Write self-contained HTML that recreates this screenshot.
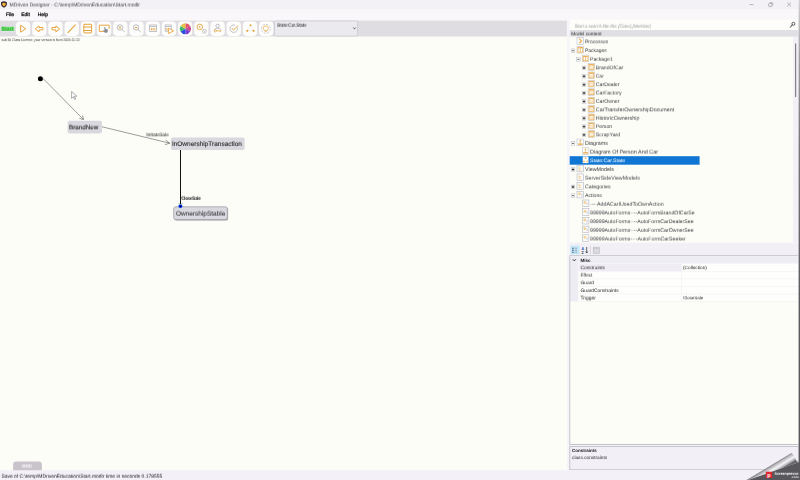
<!DOCTYPE html>
<html><head><meta charset="utf-8"><title>MDriven Designer</title>
<style>
html,body{margin:0;padding:0;}
body{width:800px;height:480px;overflow:hidden;position:relative;background:#fdfdf8;font-family:'Liberation Sans',sans-serif;}
.t{position:absolute;left:0;top:0;white-space:nowrap;text-rendering:geometricPrecision;line-height:10px;height:10px;will-change:transform;transform-origin:0 0;}
svg{position:absolute;left:0;top:0;}
</style></head><body>
<svg width="800" height="480" viewBox="0 0 800 480">
<defs>
<linearGradient id="curl" gradientUnits="userSpaceOnUse" x1="776" y1="462.4" x2="780.6" y2="469.8">
<stop offset="0" stop-color="#88888c"/><stop offset="0.18" stop-color="#b8b8bc"/><stop offset="0.55" stop-color="#f7f7f9"/><stop offset="0.85" stop-color="#b0b0b4"/><stop offset="1" stop-color="#6a6a6e"/>
</linearGradient>
<linearGradient id="edge" x1="0" y1="0" x2="0" y2="1"><stop offset="0" stop-color="#d2d2d5"/><stop offset="0.12" stop-color="#a0a0a4"/><stop offset="0.3" stop-color="#77777b"/><stop offset="0.62" stop-color="#5c5c60"/><stop offset="1" stop-color="#58585c"/></linearGradient>
</defs>
<!-- backgrounds -->
<rect x="0" y="0" width="800" height="9.4" fill="#f3f1f6"/>
<rect x="0" y="9.4" width="800" height="11.2" fill="#f9f7f9"/>
<rect x="0" y="20.6" width="566.9" height="15.9" fill="#e0dde2"/>
<rect x="566.9" y="20" width="3.3" height="450.2" fill="#f5f4f9"/>
<rect x="569.7" y="19.7" width="228.9" height="10.3" fill="#fdfdf9"/>
<rect x="569.7" y="30" width="228.9" height="6.8" fill="#e0dfe4"/>
<rect x="569.7" y="36.8" width="223.3" height="205.9" fill="#fdfdf8"/>
<rect x="793" y="36.8" width="5.6" height="205.9" fill="#f3f1f7"/>
<rect x="795.1" y="43.5" width="1.1" height="53.5" fill="#77767b"/>
<rect x="569.7" y="156.2" width="129.9" height="8.5" fill="#0f76d4"/>
<rect x="570" y="242.7" width="228.6" height="13" fill="#f2f0f6"/>
<rect x="569.4" y="255.4" width="229.2" height="0.9" fill="#b4b3b9"/>
<rect x="570" y="256.3" width="228.6" height="188" fill="#fdfdf8"/>
<rect x="570" y="256.3" width="8.6" height="45.2" fill="#efedf4"/>
<rect x="578.6" y="256.3" width="220" height="7.4" fill="#efedf4"/>
<rect x="569.4" y="256.3" width="0.8" height="188" fill="#bcbbc1"/>
<rect x="578.6" y="263.7" width="220" height="37.7" fill="#fefefc"/>
<rect x="578.6" y="263.7" width="103" height="7.4" fill="#efedf3"/>
<g fill="#f0eff3">
<rect x="578.6" y="271" width="220" height="0.6"/>
<rect x="578.6" y="278.6" width="220" height="0.6"/>
<rect x="578.6" y="286.1" width="220" height="0.6"/>
<rect x="578.6" y="293.7" width="220" height="0.6"/>
<rect x="578.6" y="301.2" width="220" height="0.6"/>
<rect x="681.4" y="263.7" width="0.6" height="37.6"/>
</g>
<rect x="569.4" y="444.1" width="229.2" height="0.9" fill="#bcbbc1"/>
<rect x="570" y="445" width="228.6" height="1.4" fill="#f5f4f9"/>
<rect x="569.8" y="446.5" width="228.6" height="23.3" fill="#f2f0f6" stroke="#bcbbc1" stroke-width="0.8"/>
<rect x="0" y="470.2" width="800" height="9.8" fill="#f3f1f7"/>
<path d="M13.1 470.3 V464.6 Q13.1 461.6 16.1 461.6 H38.9 Q41.9 461.6 41.9 464.6 V470.3 Z" fill="#c9c4cc"/>
<rect x="798" y="0" width="0.7" height="480" fill="#f8f7fa"/>
<rect x="798.6" y="0" width="1.4" height="480" fill="url(#edge)"/>
<rect x="1" y="25.9" width="13.4" height="6" fill="#e6e3ea"/>
<rect x="1.2" y="26.7" width="12.9" height="4.3" fill="#72e072"/>
<rect x="274.5" y="20.9" width="83" height="15.2" rx="0.8" fill="#ebeaee" stroke="#c2c1c7" stroke-width="0.6"/>

<!-- toolbar buttons -->
<g fill="#fdfdfb">
<rect x="15.90" y="21.6" width="14.3" height="14.3" rx="3.8"/>
<rect x="32.11" y="21.6" width="14.3" height="14.3" rx="3.8"/>
<rect x="48.32" y="21.6" width="14.3" height="14.3" rx="3.8"/>
<rect x="64.53" y="21.6" width="14.3" height="14.3" rx="3.8"/>
<rect x="80.74" y="21.6" width="14.3" height="14.3" rx="3.8"/>
<rect x="96.95" y="21.6" width="14.3" height="14.3" rx="3.8"/>
<rect x="113.16" y="21.6" width="14.3" height="14.3" rx="3.8"/>
<rect x="129.37" y="21.6" width="14.3" height="14.3" rx="3.8"/>
<rect x="145.58" y="21.6" width="14.3" height="14.3" rx="3.8"/>
<rect x="161.79" y="21.6" width="14.3" height="14.3" rx="3.8"/>
<rect x="178.00" y="21.6" width="14.3" height="14.3" rx="3.8"/>
<rect x="194.21" y="21.6" width="14.3" height="14.3" rx="3.8"/>
<rect x="210.42" y="21.6" width="14.3" height="14.3" rx="3.8"/>
<rect x="226.63" y="21.6" width="14.3" height="14.3" rx="3.8"/>
<rect x="242.84" y="21.6" width="14.3" height="14.3" rx="3.8"/>
<rect x="259.05" y="21.6" width="14.3" height="14.3" rx="3.8"/>
</g>
<g fill="none" stroke="#e6a440" stroke-width="1" stroke-linejoin="round" stroke-linecap="round">
<!-- play -->
<path d="M21 25.5 L25.9 28.7 L21 31.9 Z"/>
<!-- left arrow -->
<path d="M35.6 28.7 L39 25.9 L39 27.5 L42.9 27.5 L42.9 29.9 L39 29.9 L39 31.5 Z"/>
<!-- right arrow -->
<path d="M59.3 28.7 L55.9 25.9 L55.9 27.5 L52 27.5 L52 29.9 L55.9 29.9 L55.9 31.5 Z"/>
<!-- line -->
<path d="M68 32.7 L75.3 24.8" stroke-width="1.1"/>
<!-- class -->
<rect x="83.8" y="24.3" width="7.8" height="8.6" rx="0.6"/>
<path d="M83.8 27 H91.6 M83.8 30.5 H91.6"/>
<!-- rect w/ hand -->
<path d="M103.6 31.4 H99.3 V25.2 H109.2 V28.4"/>
</g>
<path d="M104.4 27 v3.6 l-1 -0.6 v1.2 l1.6 1.6 h2.2 l0.6 -1.2 v-2.2 l-2.4 -0.6 v-1.8 z" fill="#8d8d95"/>
<!-- zoom in / out -->
<g fill="none" stroke="#a9a8b0" stroke-width="0.8">
<circle cx="120" cy="27.5" r="2.7"/><path d="M122 29.5 L124.3 31.8" stroke-linecap="round"/>
<circle cx="136.1" cy="27.5" r="2.7"/><path d="M138.1 29.5 L140.4 31.8" stroke-linecap="round"/>
</g>
<circle cx="120" cy="27.5" r="1" fill="#e6a440"/>
<rect x="134.9" y="27" width="2.4" height="1" fill="#e6a440"/>
<!-- diagram icons -->
<g fill="none" stroke="#b5b4bb" stroke-width="0.8">
<rect x="149.6" y="25" width="7" height="6.4"/>
<rect x="165.2" y="25" width="6" height="6.2"/>
</g>
<path d="M149.6 26.5 h7" stroke="#b5b4bb" stroke-width="0.8"/>
<path d="M165.2 26.5 h6" stroke="#b5b4bb" stroke-width="0.8"/>
<path d="M151.4 28 v2.4 M153.1 28 v2.4 M154.8 28 v2.4" stroke="#e6a440" stroke-width="0.9"/>
<path d="M166.8 28 v2.4" stroke="#e6a440" stroke-width="0.9"/>
<path d="M168.4 28.2 L173.6 30.9 L168.4 33.6 Z" fill="#fdfdfb" stroke="#e6a440" stroke-width="0.9" stroke-linejoin="round"/>
<!-- color wheel -->
<g transform="translate(185.4 28.75)">
<path d="M0 0 L0 -5.6 A5.6 5.6 0 0 1 4.85 -2.8 Z" fill="#e0566a"/>
<path d="M0 0 L4.85 -2.8 A5.6 5.6 0 0 1 4.85 2.8 Z" fill="#c9488c"/>
<path d="M0 0 L4.85 2.8 A5.6 5.6 0 0 1 0 5.6 Z" fill="#7a3fd0"/>
<path d="M0 0 L0 5.6 A5.6 5.6 0 0 1 -4.85 2.8 Z" fill="#2a4fe0"/>
<path d="M0 0 L-4.85 2.8 A5.6 5.6 0 0 1 -4.85 -2.8 Z" fill="#3cb86a"/>
<path d="M0 0 L-4.85 -2.8 A5.6 5.6 0 0 1 0 -5.6 Z" fill="#e8c04a"/>
</g>
<!-- gears -->
<circle cx="199.8" cy="26.9" r="2.8" fill="none" stroke="#e6a440" stroke-width="0.9"/>
<circle cx="199.8" cy="26.9" r="0.8" fill="#e6a440"/>
<circle cx="204.4" cy="31.3" r="1.9" fill="none" stroke="#a9a8b0" stroke-width="0.7"/>
<circle cx="204.4" cy="31.3" r="0.5" fill="#a9a8b0"/>
<!-- person with key -->
<g fill="none" stroke="#a9a8b0" stroke-width="0.7">
<circle cx="217.6" cy="25.9" r="1.7"/>
<path d="M214.2 30.2 C214.4 27.8 220.8 27.8 221 29.6"/>
</g>
<circle cx="215.4" cy="30.8" r="1.1" fill="none" stroke="#e6a440" stroke-width="0.8"/>
<path d="M216.6 30.8 H221.4 M220.4 30.8 v1.1" stroke="#e6a440" stroke-width="0.8" fill="none"/>
<!-- check circle -->
<path d="M237.3 27.6 A3.7 3.7 0 1 1 235 25.2" fill="none" stroke="#a9a8b0" stroke-width="0.7"/>
<path d="M232 28.4 L233.6 30.2 L237.6 25.8" fill="none" stroke="#e6a440" stroke-width="0.9" stroke-linecap="round" stroke-linejoin="round"/>
<!-- nodes triangle -->
<path d="M250.5 25.6 L247.3 30.6 H253.6 Z" fill="none" stroke="#c9c8ce" stroke-width="0.5" stroke-dasharray="1 0.8"/>
<circle cx="250.5" cy="25.2" r="1" fill="#e6a440"/>
<circle cx="247.3" cy="30.8" r="1.1" fill="#e6a440"/>
<circle cx="253.6" cy="30.8" r="1.1" fill="#e6a440"/>
<!-- gear/bulb -->
<circle cx="265.8" cy="28.75" r="4.4" fill="none" stroke="#c3c2c9" stroke-width="0.8" stroke-dasharray="2.2 1.2"/>
<circle cx="265.8" cy="28.3" r="2.5" fill="none" stroke="#e9b460" stroke-width="0.8"/>
<path d="M264.8 31.4 h2" stroke="#e9b460" stroke-width="0.8"/>
<!-- combo arrow -->
<path d="M353.2 27.6 L354.5 28.9 L355.8 27.6" fill="none" stroke="#333" stroke-width="0.8"/>
<!-- window controls -->
<g fill="none" stroke="#8a898e" stroke-width="0.6">
<path d="M749.6 4.6 H753.4"/>
<rect x="768.6" y="3.4" width="3.2" height="3.2" rx="0.8"/>
<path d="M769.8 2.6 H772 Q772.8 2.6 772.8 3.4 V5.4"/>
<path d="M787.2 2.6 L791 6.4 M791 2.6 L787.2 6.4"/>
</g>
<!-- app icon -->
<path d="M1 2.2 Q3.9 0.4 6.9 2.2 V4.8 Q6.4 6.8 3.9 7.7 Q1.5 6.8 1 4.8 Z" fill="#3a2f30"/>
<path d="M2.2 3.2 Q3.9 2.4 5.7 3.2 V4.6 Q5.2 5.9 3.9 6.4 Q2.7 5.9 2.2 4.6 Z" fill="#f4b03c"/>
<!-- search icon -->
<circle cx="793.4" cy="23.8" r="1.5" fill="none" stroke="#3a3a3e" stroke-width="0.8"/>
<path d="M792.2 25 L790.4 27.2" stroke="#3a3a3e" stroke-width="1" stroke-linecap="round"/>
<!-- diagram -->
<circle cx="40.4" cy="78.8" r="2.5" fill="#000"/>
<path d="M42.8 78.2 L83.4 119.4" stroke="#5a5a5e" stroke-width="0.6" fill="none"/>
<path d="M79.4 118.4 L83.6 119.6 L82.6 115.4" stroke="#5a5a5e" stroke-width="0.6" fill="none"/>
<rect x="67.6" y="120.8" width="34.4" height="12.6" rx="2" fill="#d9d8de"/>
<path d="M102 126.8 L169.6 143.2" stroke="#5a5a5e" stroke-width="0.6" fill="none"/>
<path d="M165.6 140 L169.8 143.2 L165 144.6" stroke="#5a5a5e" stroke-width="0.6" fill="none"/>
<rect x="170.8" y="137.5" width="73.8" height="12.6" rx="2" fill="#d9d8de"/>
<path d="M180.5 150 V206" stroke="#111" stroke-width="1"/>
<rect x="174.3" y="207.4" width="53.8" height="13" rx="2" fill="#9d9ca2"/>
<rect x="173.7" y="206.8" width="53.6" height="12.8" rx="2" fill="#dad9df" stroke="#a3a2a8" stroke-width="0.8"/>
<path d="M178.6 203.2 L180.5 205.4 L182.4 203.2" stroke="#555" stroke-width="0.5" fill="none"/>
<circle cx="180.4" cy="206.2" r="2.3" fill="#8fdcea"/>
<circle cx="180.4" cy="206.3" r="1.8" fill="#0818e6"/>
<path d="M179.5 206.8 L180.4 205.2 L181.3 206.8 Z" fill="#000"/>
<!-- mouse cursor -->
<path d="M71.6 91.4 V98.4 L73.4 96.8 L74.6 99.4 L75.6 99 L74.4 96.4 L76.8 96.2 Z" fill="#fdfdfd" stroke="#77767b" stroke-width="0.6" stroke-linejoin="round"/>
<!-- prop toolbar icons -->
<rect x="570.4" y="245.6" width="9.2" height="8.8" fill="#c6e8f6"/>
<path d="M572.2 248.2 h1.4 M572.2 250.2 h1.4 M572.2 252.2 h1.4" stroke="#2f3f66" stroke-width="1.1"/>
<path d="M574.8 248.2 h2.6 M574.8 250.2 h2.6 M574.8 252.2 h2.6" stroke="#5d6f94" stroke-width="0.7" stroke-dasharray="0.9 0.5"/>
<text x="581.4" y="249.8" font-size="3.6" font-weight="bold" fill="#2f62c0" font-family="Liberation Sans, sans-serif">A</text>
<text x="581.5" y="253.6" font-size="3.6" font-weight="bold" fill="#222" font-family="Liberation Sans, sans-serif">Z</text>
<path d="M586.7 247 V252.8 M585.6 251.6 L586.7 253 L587.8 251.6" stroke="#222" stroke-width="0.7" fill="none"/>
<path d="M590.4 245.8 V254.4" stroke="#bdbcc2" stroke-width="0.5"/>
<rect x="593.2" y="247.2" width="6.2" height="6.4" fill="#dad9de" stroke="#b4b3b9" stroke-width="0.5"/>
<path d="M593.2 248.6 h6.2" stroke="#c4c3c9" stroke-width="0.6"/>
<!-- misc chevron -->
<path d="M572.8 259.3 L574.3 260.9 L575.8 259.3" stroke="#222" stroke-width="0.9" fill="none"/>
<!-- watermark -->
<path d="M747 480 L798.6 462.3 L800 462.3 L800 480 Z" fill="#58585c"/>
<path d="M791.4 452.9 Q793.8 453.8 794.9 457.4 Q796 461 798.7 462.3 L748.5 480 L746.5 480 Z" fill="url(#curl)"/>
<rect x="765.8" y="471.7" width="6.4" height="6.3" fill="#dc2a30"/>
<text x="767.2" y="476.9" font-size="5.4" font-weight="bold" fill="#fff" font-family="Liberation Sans, sans-serif">p</text>
<rect x="577.00" y="37.70" width="6.60" height="6.60" fill="#fbfbfb" stroke="#b4b6c2" stroke-width="0.5"/>
<path d="M579.30 38.70 l2.2 2.3 l-2.2 2.3" fill="none" stroke="#edb258" stroke-width="1.3"/>
<rect x="571.20" y="48.90" width="3.6" height="3.6" fill="#fcfcfc" stroke="#b9b9c0" stroke-width="0.5"/>
<path d="M571.90 50.70 h2.2" stroke="#333" stroke-width="0.7"/>
<rect x="577.00" y="46.40" width="6.60" height="6.60" fill="#fdfdfd" stroke="#b4b6c2" stroke-width="0.5"/>
<rect x="577.90" y="47.60" width="4.80" height="4.60" fill="none" stroke="#edb258" stroke-width="0.8"/>
<path d="M580.30 47.80 v4.40" stroke="#edb258" stroke-width="0.8"/>
<path d="M577.90 47.70 h4.80" stroke="#edb258" stroke-width="1.1"/>
<rect x="576.60" y="57.60" width="3.6" height="3.6" fill="#fcfcfc" stroke="#b9b9c0" stroke-width="0.5"/>
<path d="M577.30 59.40 h2.2" stroke="#333" stroke-width="0.7"/>
<rect x="582.30" y="55.10" width="6.60" height="6.60" fill="#fdfdfd" stroke="#b4b6c2" stroke-width="0.5"/>
<rect x="583.20" y="56.30" width="4.80" height="4.60" fill="none" stroke="#edb258" stroke-width="0.8"/>
<path d="M585.60 56.50 v4.40" stroke="#edb258" stroke-width="0.8"/>
<path d="M583.20 56.40 h4.80" stroke="#edb258" stroke-width="1.1"/>
<rect x="582.20" y="66.10" width="3.6" height="3.6" fill="#fcfcfc" stroke="#b9b9c0" stroke-width="0.5"/>
<path d="M582.80 67.90 h2.4 M584.00 66.70 v2.4" stroke="#222" stroke-width="0.9"/>
<rect x="588.10" y="63.60" width="6.60" height="6.60" fill="#fdfdfd" stroke="#b4b6c2" stroke-width="0.5"/>
<rect x="589.00" y="64.60" width="4.80" height="4.80" fill="none" stroke="#edb258" stroke-width="0.8"/>
<path d="M589.00 64.80 h4.80" stroke="#edb258" stroke-width="1.3"/>
<path d="M589.00 66.80 h4.80 M589.00 68.20 h4.80" stroke="#f3cf94" stroke-width="0.6"/>
<rect x="582.20" y="74.50" width="3.6" height="3.6" fill="#fcfcfc" stroke="#b9b9c0" stroke-width="0.5"/>
<path d="M582.80 76.30 h2.4 M584.00 75.10 v2.4" stroke="#222" stroke-width="0.9"/>
<rect x="588.10" y="72.00" width="6.60" height="6.60" fill="#fdfdfd" stroke="#b4b6c2" stroke-width="0.5"/>
<rect x="589.00" y="73.00" width="4.80" height="4.80" fill="none" stroke="#edb258" stroke-width="0.8"/>
<path d="M589.00 73.20 h4.80" stroke="#edb258" stroke-width="1.3"/>
<path d="M589.00 75.20 h4.80 M589.00 76.60 h4.80" stroke="#f3cf94" stroke-width="0.6"/>
<rect x="582.20" y="82.90" width="3.6" height="3.6" fill="#fcfcfc" stroke="#b9b9c0" stroke-width="0.5"/>
<path d="M582.80 84.70 h2.4 M584.00 83.50 v2.4" stroke="#222" stroke-width="0.9"/>
<rect x="588.10" y="80.40" width="6.60" height="6.60" fill="#fdfdfd" stroke="#b4b6c2" stroke-width="0.5"/>
<rect x="589.00" y="81.40" width="4.80" height="4.80" fill="none" stroke="#edb258" stroke-width="0.8"/>
<path d="M589.00 81.60 h4.80" stroke="#edb258" stroke-width="1.3"/>
<path d="M589.00 83.60 h4.80 M589.00 85.00 h4.80" stroke="#f3cf94" stroke-width="0.6"/>
<rect x="582.20" y="91.30" width="3.6" height="3.6" fill="#fcfcfc" stroke="#b9b9c0" stroke-width="0.5"/>
<path d="M582.80 93.10 h2.4 M584.00 91.90 v2.4" stroke="#222" stroke-width="0.9"/>
<rect x="588.10" y="88.80" width="6.60" height="6.60" fill="#fdfdfd" stroke="#b4b6c2" stroke-width="0.5"/>
<rect x="589.00" y="89.80" width="4.80" height="4.80" fill="none" stroke="#edb258" stroke-width="0.8"/>
<path d="M589.00 90.00 h4.80" stroke="#edb258" stroke-width="1.3"/>
<path d="M589.00 92.00 h4.80 M589.00 93.40 h4.80" stroke="#f3cf94" stroke-width="0.6"/>
<rect x="582.20" y="99.70" width="3.6" height="3.6" fill="#fcfcfc" stroke="#b9b9c0" stroke-width="0.5"/>
<path d="M582.80 101.50 h2.4 M584.00 100.30 v2.4" stroke="#222" stroke-width="0.9"/>
<rect x="588.10" y="97.20" width="6.60" height="6.60" fill="#fdfdfd" stroke="#b4b6c2" stroke-width="0.5"/>
<rect x="589.00" y="98.20" width="4.80" height="4.80" fill="none" stroke="#edb258" stroke-width="0.8"/>
<path d="M589.00 98.40 h4.80" stroke="#edb258" stroke-width="1.3"/>
<path d="M589.00 100.40 h4.80 M589.00 101.80 h4.80" stroke="#f3cf94" stroke-width="0.6"/>
<rect x="582.20" y="108.10" width="3.6" height="3.6" fill="#fcfcfc" stroke="#b9b9c0" stroke-width="0.5"/>
<path d="M582.80 109.90 h2.4 M584.00 108.70 v2.4" stroke="#222" stroke-width="0.9"/>
<rect x="588.10" y="105.60" width="6.60" height="6.60" fill="#fdfdfd" stroke="#b4b6c2" stroke-width="0.5"/>
<rect x="589.00" y="106.60" width="4.80" height="4.80" fill="none" stroke="#edb258" stroke-width="0.8"/>
<path d="M589.00 106.80 h4.80" stroke="#edb258" stroke-width="1.3"/>
<path d="M589.00 108.80 h4.80 M589.00 110.20 h4.80" stroke="#f3cf94" stroke-width="0.6"/>
<rect x="582.20" y="116.50" width="3.6" height="3.6" fill="#fcfcfc" stroke="#b9b9c0" stroke-width="0.5"/>
<path d="M582.80 118.30 h2.4 M584.00 117.10 v2.4" stroke="#222" stroke-width="0.9"/>
<rect x="588.10" y="114.00" width="6.60" height="6.60" fill="#fdfdfd" stroke="#b4b6c2" stroke-width="0.5"/>
<rect x="589.00" y="115.00" width="4.80" height="4.80" fill="none" stroke="#edb258" stroke-width="0.8"/>
<path d="M589.00 115.20 h4.80" stroke="#edb258" stroke-width="1.3"/>
<path d="M589.00 117.20 h4.80 M589.00 118.60 h4.80" stroke="#f3cf94" stroke-width="0.6"/>
<rect x="582.20" y="124.80" width="3.6" height="3.6" fill="#fcfcfc" stroke="#b9b9c0" stroke-width="0.5"/>
<path d="M582.80 126.60 h2.4 M584.00 125.40 v2.4" stroke="#222" stroke-width="0.9"/>
<rect x="588.10" y="122.30" width="6.60" height="6.60" fill="#fdfdfd" stroke="#b4b6c2" stroke-width="0.5"/>
<rect x="589.00" y="123.30" width="4.80" height="4.80" fill="none" stroke="#edb258" stroke-width="0.8"/>
<path d="M589.00 123.50 h4.80" stroke="#edb258" stroke-width="1.3"/>
<path d="M589.00 125.50 h4.80 M589.00 126.90 h4.80" stroke="#f3cf94" stroke-width="0.6"/>
<rect x="582.20" y="133.10" width="3.6" height="3.6" fill="#fcfcfc" stroke="#b9b9c0" stroke-width="0.5"/>
<path d="M582.80 134.90 h2.4 M584.00 133.70 v2.4" stroke="#222" stroke-width="0.9"/>
<rect x="588.10" y="130.60" width="6.60" height="6.60" fill="#fdfdfd" stroke="#b4b6c2" stroke-width="0.5"/>
<rect x="589.00" y="131.60" width="4.80" height="4.80" fill="none" stroke="#edb258" stroke-width="0.8"/>
<path d="M589.00 131.80 h4.80" stroke="#edb258" stroke-width="1.3"/>
<path d="M589.00 133.80 h4.80 M589.00 135.20 h4.80" stroke="#f3cf94" stroke-width="0.6"/>
<rect x="571.20" y="141.60" width="3.6" height="3.6" fill="#fcfcfc" stroke="#b9b9c0" stroke-width="0.5"/>
<path d="M571.90 143.40 h2.2" stroke="#333" stroke-width="0.7"/>
<rect x="577.00" y="139.10" width="6.60" height="6.60" fill="#fdfdfd" stroke="#b4b6c2" stroke-width="0.5"/>
<rect x="579.50" y="140.10" width="1.6" height="1.4" fill="#edb258"/>
<path d="M580.30 141.30 v2.2" stroke="#edb258" stroke-width="0.7"/>
<rect x="577.90" y="143.40" width="4.80" height="1.5" fill="#edb258"/>
<rect x="582.30" y="147.80" width="6.60" height="6.60" fill="#fdfdfd" stroke="#b4b6c2" stroke-width="0.5"/>
<rect x="584.80" y="148.80" width="1.6" height="1.4" fill="#edb258"/>
<path d="M585.60 150.00 v2.2" stroke="#edb258" stroke-width="0.7"/>
<rect x="583.20" y="152.10" width="4.80" height="1.5" fill="#edb258"/>
<rect x="582.70" y="156.50" width="5.80" height="6.60" fill="#fdfdfd"/>
<rect x="584.85" y="157.40" width="1.5" height="1.5" fill="#edb258"/>
<rect x="583.20" y="160.70" width="1.5" height="1.5" fill="#edb258"/>
<rect x="586.50" y="160.70" width="1.5" height="1.5" fill="#edb258"/>
<rect x="571.20" y="167.70" width="3.6" height="3.6" fill="#fcfcfc" stroke="#b9b9c0" stroke-width="0.5"/>
<path d="M571.80 169.50 h2.4 M573.00 168.30 v2.4" stroke="#222" stroke-width="0.9"/>
<rect x="577.00" y="165.20" width="6.60" height="6.60" fill="#fbfbfb" stroke="#aeb0bb" stroke-width="0.55"/>
<path d="M579.00 166.40 v3.8 h2.4 M579.00 168.00 h2" fill="none" stroke="#f3cf96" stroke-width="0.9"/>
<rect x="577.00" y="173.90" width="6.60" height="6.60" fill="#fbfbfb" stroke="#aeb0bb" stroke-width="0.55"/>
<path d="M579.00 175.10 v3.8 h2.4 M579.00 176.70 h2" fill="none" stroke="#f3cf96" stroke-width="0.9"/>
<rect x="571.20" y="185.10" width="3.6" height="3.6" fill="#fcfcfc" stroke="#b9b9c0" stroke-width="0.5"/>
<path d="M571.80 186.90 h2.4 M573.00 185.70 v2.4" stroke="#222" stroke-width="0.9"/>
<rect x="577.00" y="182.60" width="6.60" height="6.60" fill="#fbfbfb" stroke="#aeb0bb" stroke-width="0.55"/>
<path d="M579.00 183.80 v3.8 h2.4 M579.00 185.40 h2" fill="none" stroke="#f3cf96" stroke-width="0.9"/>
<rect x="571.20" y="193.80" width="3.6" height="3.6" fill="#fcfcfc" stroke="#b9b9c0" stroke-width="0.5"/>
<path d="M571.90 195.60 h2.2" stroke="#333" stroke-width="0.7"/>
<rect x="577.00" y="191.30" width="6.60" height="6.60" fill="#fbfbfb" stroke="#aeb0bb" stroke-width="0.55"/>
<rect x="578.20" y="192.50" width="2.6" height="2.6" rx="0.6" fill="#f5d193"/>
<rect x="581.00" y="193.90" width="1.6" height="2.4" fill="#dcdde3"/>
<rect x="582.30" y="200.00" width="6.60" height="6.60" fill="#fbfbfb" stroke="#aeb0bb" stroke-width="0.55"/>
<rect x="583.50" y="201.20" width="2.6" height="2.6" rx="0.6" fill="#f5d193"/>
<rect x="586.30" y="202.60" width="1.6" height="2.4" fill="#dcdde3"/>
<rect x="582.30" y="208.70" width="6.60" height="6.60" fill="#fbfbfb" stroke="#aeb0bb" stroke-width="0.55"/>
<rect x="583.50" y="209.90" width="2.6" height="2.6" rx="0.6" fill="#f5d193"/>
<rect x="586.30" y="211.30" width="1.6" height="2.4" fill="#dcdde3"/>
<rect x="582.30" y="217.40" width="6.60" height="6.60" fill="#fbfbfb" stroke="#aeb0bb" stroke-width="0.55"/>
<rect x="583.50" y="218.60" width="2.6" height="2.6" rx="0.6" fill="#f5d193"/>
<rect x="586.30" y="220.00" width="1.6" height="2.4" fill="#dcdde3"/>
<rect x="582.30" y="226.10" width="6.60" height="6.60" fill="#fbfbfb" stroke="#aeb0bb" stroke-width="0.55"/>
<rect x="583.50" y="227.30" width="2.6" height="2.6" rx="0.6" fill="#f5d193"/>
<rect x="586.30" y="228.70" width="1.6" height="2.4" fill="#dcdde3"/>
<rect x="582.30" y="234.80" width="6.60" height="6.60" fill="#fbfbfb" stroke="#aeb0bb" stroke-width="0.55"/>
<rect x="583.50" y="236.00" width="2.6" height="2.6" rx="0.6" fill="#f5d193"/>
<rect x="586.30" y="237.40" width="1.6" height="2.4" fill="#dcdde3"/>

</svg>
<div class="t" style="transform:translate(9px,0.46px) rotate(0.004deg);padding-left:0.60px;font-size:5.033px;color:#3c3c40;">MDriven Designer - C:\temp\MDrivenEducation\Start.modlr</div>
<div class="t" style="transform:translate(6px,10.17px) rotate(0.004deg);padding-left:0.00px;font-size:5.050px;color:#000;-webkit-text-stroke:0.22px #000;">File</div>
<div class="t" style="transform:translate(21px,10.17px) rotate(0.004deg);padding-left:0.20px;font-size:5.050px;color:#000;-webkit-text-stroke:0.22px #000;">Edit</div>
<div class="t" style="transform:translate(37px,10.17px) rotate(0.004deg);padding-left:0.70px;font-size:5.050px;color:#000;-webkit-text-stroke:0.22px #000;">Help</div>
<div class="t" style="transform:translate(1px,24.64px) rotate(0.004deg);padding-left:0.60px;font-size:5.266px;color:#36b23e;font-weight:bold;">Start</div>
<div class="t" style="transform:translate(1px,35.09px) rotate(0.004deg) scaleX(0.8340);padding-left:0.60px;font-size:3.900px;color:#333;">sub 50 Class License, your version is from 2024-11-13</div>
<div class="t" style="transform:translate(277px,20.75px) rotate(0.004deg) scaleX(0.8640);padding-left:0.00px;font-size:5.000px;color:#111;">State:Car.State</div>
<div class="t" style="transform:translate(69px,123.37px) rotate(0.004deg);padding-left:0.00px;font-size:6.275px;color:#303034;-webkit-text-stroke:0.15px #303034;">BrandNew</div>
<div class="t" style="transform:translate(171px,139.94px) rotate(0.004deg);padding-left:0.90px;font-size:6.499px;color:#303034;-webkit-text-stroke:0.15px #303034;">InOwnershipTransaction</div>
<div class="t" style="transform:translate(175px,209.64px) rotate(0.004deg);padding-left:0.90px;font-size:6.500px;color:#3a3a3e;-webkit-text-stroke:0.1px #3a3a3e;">OwnershipStable</div>
<div class="t" style="transform:translate(146px,130.35px) rotate(0.004deg) scaleX(0.9053);padding-left:0.20px;font-size:5.000px;color:#222;">InitiateSale</div>
<div class="t" style="transform:translate(181px,193.85px) rotate(0.004deg) scaleX(0.8200);padding-left:0.20px;font-size:5.000px;color:#000;font-weight:bold;">CloseSale</div>
<div class="t" style="transform:translate(1px,472.74px) rotate(0.004deg);padding-left:0.40px;font-size:4.963px;color:#111;">Save of C:\temp\MDrivenEducation\Start.modlr time in seconds 0.178555</div>
<div class="t" style="transform:translate(22px,461.47px) rotate(0.004deg);padding-left:0.30px;font-size:4.454px;color:#fff;font-weight:bold;">DOC</div>
<div class="t" style="transform:translate(574px,22.72px) rotate(0.004deg) scaleX(0.8811);padding-left:0.70px;font-size:4.900px;color:#96969c;font-style:italic;">Start a search like this [Class].[Member]</div>
<div class="t" style="transform:translate(571px,30.40px) rotate(0.004deg);padding-left:0.20px;font-size:4.839px;color:#222;">Model content</div>
<div class="t" style="transform:translate(585px,37.35px) rotate(0.004deg);padding-left:0.00px;font-size:5.012px;color:#3a3a3e;">Processes</div>
<div class="t" style="transform:translate(585px,47.04px) rotate(0.004deg);padding-left:0.00px;font-size:4.963px;color:#3a3a3e;">Packages</div>
<div class="t" style="transform:translate(590px,54.79px) rotate(0.004deg);padding-left:0.00px;font-size:5.125px;color:#3a3a3e;">Package1</div>
<div class="t" style="transform:translate(595px,63.31px) rotate(0.004deg);padding-left:0.80px;font-size:5.172px;color:#3a3a3e;">BrandOfCar</div>
<div class="t" style="transform:translate(595px,72.64px) rotate(0.004deg);padding-left:0.80px;font-size:4.964px;color:#3a3a3e;">Car</div>
<div class="t" style="transform:translate(595px,80.12px) rotate(0.004deg);padding-left:0.80px;font-size:5.200px;color:#3a3a3e;">CarDealer</div>
<div class="t" style="transform:translate(595px,88.52px) rotate(0.004deg);padding-left:0.80px;font-size:5.217px;color:#3a3a3e;">CarFactory</div>
<div class="t" style="transform:translate(595px,96.92px) rotate(0.004deg);padding-left:0.80px;font-size:5.201px;color:#3a3a3e;">CarOwner</div>
<div class="t" style="transform:translate(595px,105.37px) rotate(0.004deg);padding-left:0.80px;font-size:5.371px;color:#3a3a3e;">CarTransferOwnershipDocument</div>
<div class="t" style="transform:translate(595px,113.78px) rotate(0.004deg);padding-left:0.80px;font-size:5.399px;color:#3a3a3e;">HistoricOwnership</div>
<div class="t" style="transform:translate(595px,122.02px) rotate(0.004deg);padding-left:0.80px;font-size:5.207px;color:#3a3a3e;">Person</div>
<div class="t" style="transform:translate(595px,130.35px) rotate(0.004deg);padding-left:0.80px;font-size:5.289px;color:#3a3a3e;">ScrapYard</div>
<div class="t" style="transform:translate(585px,138.87px) rotate(0.004deg);padding-left:0.00px;font-size:5.375px;color:#3a3a3e;">Diagrams</div>
<div class="t" style="transform:translate(590px,147.61px) rotate(0.004deg);padding-left:0.00px;font-size:5.478px;color:#3a3a3e;">Diagram Of Person And Car</div>
<div class="t" style="transform:translate(590px,156.21px) rotate(0.004deg);padding-left:0.00px;font-size:5.190px;color:#fff;">State:Car.State</div>
<div class="t" style="transform:translate(585px,164.98px) rotate(0.004deg);padding-left:0.00px;font-size:5.397px;color:#3a3a3e;">ViewModels</div>
<div class="t" style="transform:translate(585px,173.66px) rotate(0.004deg);padding-left:0.00px;font-size:5.320px;color:#3a3a3e;">ServerSideViewModels</div>
<div class="t" style="transform:translate(585px,182.35px) rotate(0.004deg);padding-left:0.00px;font-size:5.314px;color:#3a3a3e;">Categories</div>
<div class="t" style="transform:translate(585px,191.01px) rotate(0.004deg);padding-left:0.00px;font-size:5.183px;color:#3a3a3e;">Actions</div>
<div class="t" style="transform:translate(590px,199.76px) rotate(0.004deg);padding-left:0.00px;font-size:5.319px;color:#3a3a3e;">----AddACarIUsedToOwnAction</div>
<div class="t" style="transform:translate(590px,208.44px) rotate(0.004deg);padding-left:0.00px;font-size:5.263px;color:#3a3a3e;">99999AutoForms----AutoFormBrandOfCarSe</div>
<div class="t" style="transform:translate(590px,217.13px) rotate(0.004deg);padding-left:0.00px;font-size:5.251px;color:#3a3a3e;">99999AutoForms----AutoFormCarDealerSee</div>
<div class="t" style="transform:translate(590px,225.83px) rotate(0.004deg);padding-left:0.00px;font-size:5.251px;color:#3a3a3e;">99999AutoForms----AutoFormCarOwnerSee</div>
<div class="t" style="transform:translate(590px,234.54px) rotate(0.004deg);padding-left:0.00px;font-size:5.271px;color:#3a3a3e;">99999AutoForms----AutoFormCarSeeker</div>
<div class="t" style="transform:translate(580px,255.90px) rotate(0.004deg);padding-left:0.50px;font-size:4.543px;color:#111;font-weight:bold;">Misc</div>
<div class="t" style="transform:translate(580px,264.20px) rotate(0.004deg);padding-left:0.50px;font-size:4.844px;color:#222;">Constraints</div>
<div class="t" style="transform:translate(580px,270.65px) rotate(0.004deg);padding-left:0.50px;font-size:4.687px;color:#222;">Effect</div>
<div class="t" style="transform:translate(580px,279.20px) rotate(0.004deg);padding-left:0.50px;font-size:4.857px;color:#222;">Guard</div>
<div class="t" style="transform:translate(580px,287.00px) rotate(0.004deg);padding-left:0.50px;font-size:4.861px;color:#222;">GuardConstraints</div>
<div class="t" style="transform:translate(580px,294.53px) rotate(0.004deg);padding-left:0.50px;font-size:4.951px;color:#222;">Trigger</div>
<div class="t" style="transform:translate(683px,264.17px) rotate(0.004deg);padding-left:0.00px;font-size:4.745px;color:#222;">(Collection)</div>
<div class="t" style="transform:translate(683px,293.36px) rotate(0.004deg);padding-left:0.00px;font-size:4.431px;color:#222;">CloseSale</div>
<div class="t" style="transform:translate(572px,445.97px) rotate(0.004deg);padding-left:0.00px;font-size:4.463px;color:#111;font-weight:bold;">Constraints</div>
<div class="t" style="transform:translate(572px,454.07px) rotate(0.004deg);padding-left:0.00px;font-size:4.762px;color:#222;">class.constraints</div>
<div class="t" style="transform:translate(774px,468.79px) rotate(0.004deg);padding-left:0.60px;font-size:3.613px;color:#fff;font-weight:bold;">Screenpresso</div>
<div class="t" style="transform:translate(791px,472.06px) rotate(0.004deg);padding-left:0.00px;font-size:3.213px;color:#e4e4e4;font-weight:bold;">.com</div>
</body></html>
